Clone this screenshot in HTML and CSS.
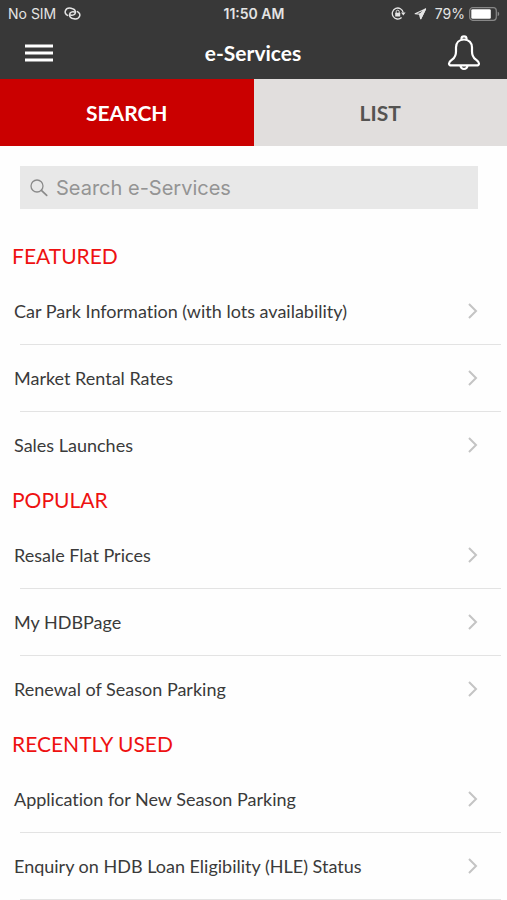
FILE: index.html
```html
<!DOCTYPE html>
<html lang="en">
<head>
<meta charset="utf-8">
<meta name="viewport" content="width=device-width, initial-scale=1">
<title>e-Services</title>
<link rel="stylesheet" href="styles.css">
</head>
<body>
<header class="top">
  <div class="status">
    <div class="status-side">
      <span>No SIM</span>
      <svg class="link-icon" width="17" height="13" viewBox="0 0 17 13" fill="none" stroke="currentColor" stroke-width="1.5" stroke-linecap="round" aria-hidden="true">
        <path d="M3.600 8.400C1.600 7.600.7 5.400 1.400 3.700 2.300 1.400 4.800.8 7 1.200c2.700.5 4.700 2.300 4.400 4.500-.3 2.100-2.700 3-4.900 2.300"/>
        <path d="M13.400 4.600c2 .8 2.900 3 2.200 4.700-.9 2.300-3.400 2.900-5.600 2.500-2.700-.5-4.700-2.300-4.400-4.500.3-2.100 2.700-3 4.900-2.300"/>
      </svg>
    </div>
    <span class="clock">11:50 AM</span>
    <div class="status-side status-right">
      <svg width="15" height="13" viewBox="0 0 15 13" fill="none" stroke="currentColor" aria-hidden="true">
        <path d="M12.200 5.500A5.500 5.500 0 1 0 10.600 10.500" stroke-width="1.300"/>
        <path d="M10 5.500h4.600L12.300 8.500z" fill="currentColor" stroke="none"/>
        <rect x="4.200" y="5.800" width="5" height="3.700" rx=".5" fill="currentColor" stroke="none"/>
        <path d="M5.200 6V4.700a1.500 1.500 0 0 1 3 0V6"/>
      </svg>
      <svg class="arrow-icon" width="13" height="12" viewBox="0 0 13 12" fill="none" stroke="currentColor" stroke-width="1.200" stroke-linejoin="round" aria-hidden="true">
        <path d="M11.500 1 1.200 5.700l4.600.4.900 4.600z"/>
        <path d="M11.500 1 5.800 6.100l.9 4.600z" fill="currentColor"/>
      </svg>
      <span>79%</span>
      <svg class="battery-icon" width="31" height="14" viewBox="0 0 31 14" aria-hidden="true">
        <rect x=".7" y=".7" width="26.600" height="12.600" rx="3" fill="none" stroke="#888" stroke-width="1.200"/>
        <rect x="2.300" y="2.300" width="19.500" height="9.400" rx="1.300" fill="#fff"/>
        <path d="M28.700 4.800c2 .6 2 3.800 0 4.400z" fill="#888"/>
      </svg>
    </div>
  </div>
  <div class="nav">
    <button class="icon-button" type="button" aria-label="Menu">
      <svg width="28" height="18" viewBox="0 0 28 18" fill="#fff"><path d="M0 .5h28v3H0zM0 7.500h28v3H0zM0 14.500h28v3H0z"/></svg>
    </button>
    <h1 class="title">e-Services</h1>
    <button class="icon-button bell" type="button" aria-label="Notifications">
      <svg width="34" height="36" viewBox="0 0 34 36" fill="none" stroke="#fff" stroke-width="2.200" stroke-linejoin="round">
        <path d="M17 4.500c-5 0-8 3.400-8 8v4c0 4-1.200 6-3.600 7.900-1.800 1.400-3.400 2.500-3.400 4 0 1.300 1 2 2.500 2h25c1.500 0 2.500-.7 2.500-2 0-1.500-1.600-2.600-3.400-4C26.200 22.500 25 20.500 25 16.500v-4c0-4.600-3-8-8-8z"/>
        <path d="M14.500 4.500V3.600a2.500 2.300 0 0 1 5 0v.9M13.500 30.600a3.500 3.400 0 0 0 7 0"/>
      </svg>
    </button>
  </div>
</header>
<nav class="tabs">
  <button class="tab tab-active" type="button">SEARCH</button>
  <button class="tab" type="button">LIST</button>
</nav>
<main>
  <label class="search">
    <svg width="18" height="18" viewBox="0 0 18 18" fill="none" stroke="#8a8a8a" stroke-width="1.300" stroke-linecap="round" aria-hidden="true">
      <circle cx="7" cy="7" r="6"/><path d="M11.400 11.400l5.300 5" stroke-width="1.700"/>
    </svg>
    <input class="search-input" type="search" placeholder="Search e-Services" aria-label="Search e-Services">
  </label>
  <section>
    <h2 class="heading">FEATURED</h2>
    <ul class="list">
      <li class="item"><a class="row" href="#">Car Park Information (with lots availability)<svg class="chevron" viewBox="0 0 10 16"><path d="M1 1l7 7-7 7"/></svg></a></li>
      <li class="item"><a class="row" href="#">Market Rental Rates<svg class="chevron" viewBox="0 0 10 16"><path d="M1 1l7 7-7 7"/></svg></a></li>
      <li class="item"><a class="row" href="#">Sales Launches<svg class="chevron" viewBox="0 0 10 16"><path d="M1 1l7 7-7 7"/></svg></a></li>
    </ul>
  </section>
  <section>
    <h2 class="heading">POPULAR</h2>
    <ul class="list">
      <li class="item"><a class="row" href="#">Resale Flat Prices<svg class="chevron" viewBox="0 0 10 16"><path d="M1 1l7 7-7 7"/></svg></a></li>
      <li class="item"><a class="row" href="#">My HDBPage<svg class="chevron" viewBox="0 0 10 16"><path d="M1 1l7 7-7 7"/></svg></a></li>
      <li class="item"><a class="row" href="#">Renewal of Season Parking<svg class="chevron" viewBox="0 0 10 16"><path d="M1 1l7 7-7 7"/></svg></a></li>
    </ul>
  </section>
  <section>
    <h2 class="heading">RECENTLY USED</h2>
    <ul class="list list-open">
      <li class="item"><a class="row" href="#">Application for New Season Parking<svg class="chevron" viewBox="0 0 10 16"><path d="M1 1l7 7-7 7"/></svg></a></li>
      <li class="item"><a class="row" href="#">Enquiry on HDB Loan Eligibility (HLE) Status<svg class="chevron" viewBox="0 0 10 16"><path d="M1 1l7 7-7 7"/></svg></a></li>
    </ul>
  </section>
</main>
</body>
</html>
```
FILE: styles.css
```css
* {
  box-sizing: border-box;
}

body {
  margin: 0;
  background: #fefefe;
  color: #3a3a3a;
  font-family: Lato, "Liberation Sans", sans-serif;
  font-variant-ligatures: none;
}

button {
  border: 0;
  padding: 0;
  font: inherit;
}

svg {
  display: block;
  flex: none;
}

.top {
  background: #383838;
  color: #fff;
}

.status {
  display: grid;
  grid-template-columns: 1fr auto 1fr;
  align-items: center;
  height: 27px;
  padding: 0 7px 0 8px;
  color: #e4e4e4;
  font: 14px/18px Inter, "Liberation Sans", sans-serif;
}

.status-side {
  display: flex;
  align-items: center;
  gap: 8px;
}

.status-right {
  justify-content: flex-end;
}

.battery-icon {
  margin-left: -4px;
}

.clock {
  font-weight: 600;
}

.nav {
  display: grid;
  grid-template-columns: 1fr auto 1fr;
  align-items: center;
  height: 52px;
  padding: 0 26px 0 25px;
}

.icon-button {
  justify-self: start;
  background: none;
}

.bell {
  justify-self: end;
}

.title {
  margin: 0;
  font-size: 21px;
  line-height: 28px;
  font-weight: 700;
}

.tabs {
  display: grid;
  grid-template-columns: 1fr 1fr;
  height: 67px;
}

.tab {
  background: #e1dedd;
  color: #555452;
  font-size: 21px;
  font-weight: 700;
}

.tab-active {
  background: #ca0000;
  color: #fff;
}

.search {
  display: flex;
  align-items: center;
  gap: 8px;
  height: 43px;
  margin: 20px 29px 26px 20px;
  padding: 0 10px;
  background: #e8e8e8;
}

.search-input {
  flex: 1;
  min-width: 0;
  border: 0;
  padding: 0;
  background: none;
  outline: 0;
  font: 20px/28px Inter, "Liberation Sans", sans-serif;
}

.search-input::placeholder {
  color: #949494;
}

.heading {
  margin: 0;
  padding: 0 12px 2px;
  color: #ee1111;
  font-size: 21px;
  line-height: 41px;
  font-weight: 400;
}

.list {
  margin: 0;
  padding: 0;
  list-style: none;
}

.item::after {
  content: "";
  display: block;
  height: 1px;
  margin: 0 6px 0 20px;
  background: #e3e3e3;
}

.list:not(.list-open) .item:last-child::after {
  background: none;
}

.row {
  display: flex;
  align-items: center;
  justify-content: space-between;
  height: 66px;
  padding: 0 29px 0 14px;
  color: inherit;
  font-size: 18px;
  line-height: 24px;
  text-decoration: none;
}

.chevron {
  width: 10px;
  height: 16px;
  fill: none;
  stroke: #c4c4c4;
  stroke-width: 2;
}
```
